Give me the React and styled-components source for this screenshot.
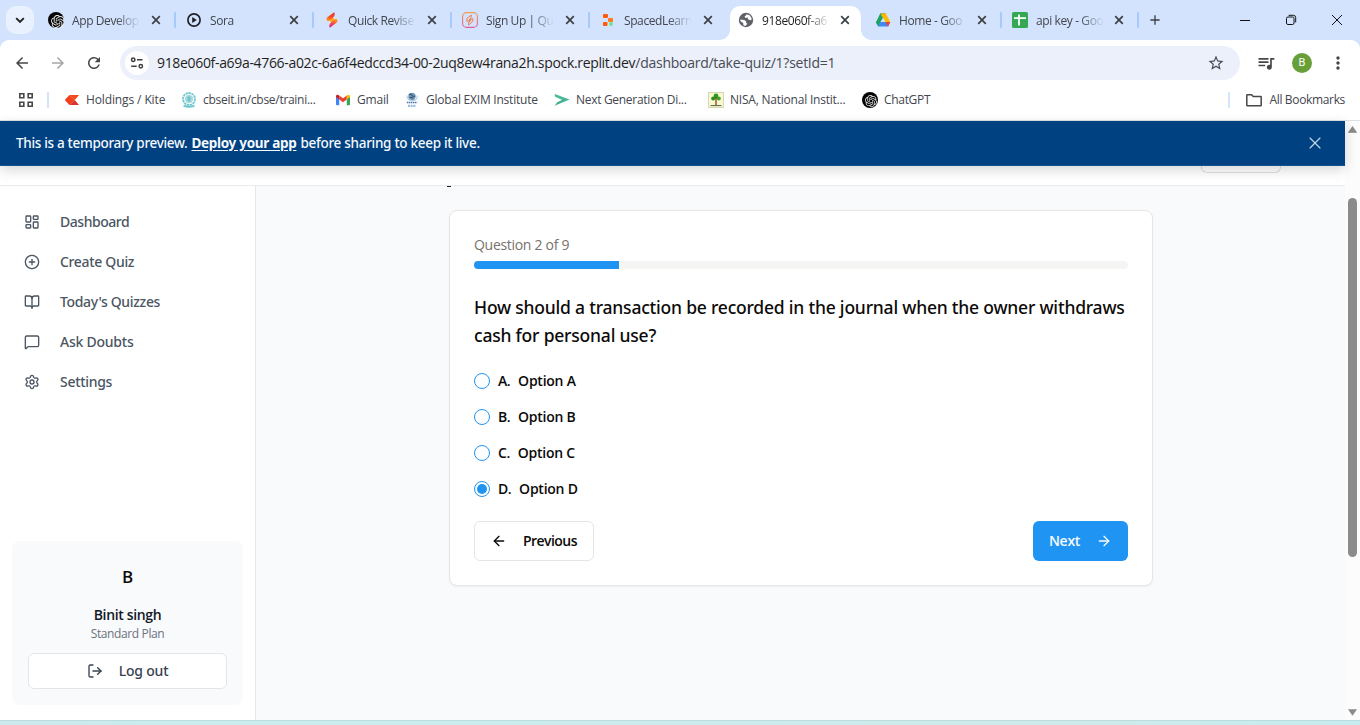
import React from "react";
import styled, { createGlobalStyle, css } from "styled-components";
import {
  LayoutDashboard, CirclePlus, BookOpen, MessageSquare, Settings, LogOut, ArrowLeft, ArrowRight, X,
} from "lucide-react";
import { SiOpenai } from "react-icons/si";
import { MdArrowBack, MdArrowForward, MdRefresh, MdStarBorder, MdMoreVert, MdQueueMusic, MdAdd } from "react-icons/md";

const MEDIUM_FONT = `"Noto Sans", "Open Sans", sans-serif`;

const GlobalStyle = createGlobalStyle`
  *, *::before, *::after { box-sizing: border-box; }
  html, body { margin: 0; padding: 0; overflow: hidden; }
  body { font-family: "Open Sans", "Noto Sans", sans-serif; font-size: 14px; color: #0c0a09; }
  svg { display: block; flex: none; }
`;

const Window = styled.div`
  width: 1360px;
  height: 725px;
  display: flex;
  flex-direction: column;
  overflow: hidden;
  background: #fff;
`;

const Tracked = styled.span`
  letter-spacing: ${(p) => p.$track || 0}px;
  white-space: nowrap;
`;

/* Tab strip */
const TabStrip = styled.div`
  height: 40px;
  flex: none;
  display: flex;
  background: #d3e3fd;
`;

const TabSearch = styled.div`
  width: 28px;
  height: 28px;
  margin: 6px 6px 0;
  border-radius: 10px;
  background: #e9f1fe;
  display: grid;
  place-items: center;
`;

const Tab = styled.div`
  width: ${(p) => p.$width}px;
  height: 40px;
  padding: 0 0 0 8px;
  display: flex;
  align-items: center;
`;

const ActiveTab = styled.div`
  width: 131px;
  margin: 6px 6px 0 0;
  height: 34px;
  padding: 0 0 6px 8px;
  display: flex;
  align-items: center;
  background: #fff;
  border-radius: 10px 10px 0 0;
  position: relative;
  &::before, &::after {
    content: "";
    position: absolute;
    bottom: 0;
    width: 10px;
    height: 10px;
  }
  &::before { left: -10px; background: radial-gradient(circle at 0 0, transparent 9.5px, #fff 10px); }
  &::after { right: -10px; background: radial-gradient(circle at 100% 0, transparent 9.5px, #fff 10px); }
`;

const TabTitle = styled.span`
  width: 67px;
  margin-left: 8px;
  overflow: hidden;
  white-space: nowrap;
  font-size: 12px;
  line-height: 18px;
  padding-top: 1px;
  letter-spacing: -0.4px;
  color: ${(p) => (p.$active ? "#1f1f1f" : "#42464d")};
  mask-image: linear-gradient(to right, #000 44px, transparent 68px);
`;

const TabClose = styled.span`
  width: 16px;
  margin-left: ${(p) => (p.$tight ? 8 : 9)}px;
  display: grid;
  place-items: center;
`;

const TabDivider = styled.span`
  width: 2px;
  height: 16px;
  margin-left: 10px;
  border-radius: 1px;
  background: #a8c7fa;
`;

const NewTab = styled.div`
  width: 16px;
  margin: 12px 0 0 6px;
`;

const WindowControls = styled.div`
  flex: 1;
  display: flex;
  justify-content: flex-end;
  align-items: center;
  gap: 34px;
  padding-right: 17px;
`;

/* Toolbar */
const ToolbarBack = styled.div`
  flex: none;
  background: #d3e3fd;
`;

const Toolbar = styled.div`
  height: 46px;
  display: flex;
  align-items: center;
  padding: 0 12px 0 13px;
  background: #fff;
  border-radius: 9px 9px 0 0;
  color: #474747;
`;

const NavButtons = styled.div`
  display: flex;
  width: 107px;
  gap: 18px;
`;

const AddressBar = styled.div`
  width: 1120px;
  height: 34px;
  display: flex;
  align-items: center;
  padding: 0 15px 0 5px;
  border-radius: 17px;
  background: #ecf0fa;
  font-size: 14px;
  color: #474b52;
`;

const SiteInfo = styled.span`
  width: 24px;
  height: 24px;
  margin-right: 8px;
  border-radius: 50%;
  background: #fff;
  display: grid;
  place-items: center;
`;

const AddressText = styled.span`
  line-height: 20px;
  padding-bottom: 1px;
`;

const Host = styled(Tracked)`
  color: #1f1f1f;
`;

const Spacer = styled.span`
  flex: 1;
`;

const ToolbarActions = styled.div`
  flex: 1;
  display: flex;
  align-items: center;
  justify-content: space-between;
  padding-left: 16px;
`;

const Avatar = styled.span`
  width: 20px;
  height: 20px;
  border-radius: 50%;
  background: #689f38;
  color: #fff;
  font: 11px/20px Roboto, sans-serif;
  text-align: center;
`;

/* Bookmarks */
const BookmarkBar = styled.div`
  height: 35px;
  flex: none;
  display: flex;
  align-items: flex-start;
  padding: 6px 15px 0 18px;
  border-bottom: 1px solid #dfe1e0;
  color: #42464d;
  font-size: 12px;
`;

const Bookmark = styled.span`
  display: flex;
  align-items: center;
  gap: 6px;
  width: ${(p) => (p.$width ? `${p.$width}px` : "auto")};
  line-height: 16px;
`;

const BarDivider = styled.span`
  width: 2px;
  height: 16px;
  margin: 0 15px 0 ${(p) => p.$left || 0}px;
  border-radius: 1px;
  background: #d3e3fd;
`;

/* Page */
const Viewport = styled.div`
  height: 599px;
  flex: none;
  display: flex;
`;

const Page = styled.div`
  width: 1345px;
  display: flex;
  flex-direction: column;
`;

const Banner = styled.div`
  height: 45px;
  flex: none;
  display: flex;
  align-items: center;
  gap: 4px;
  padding: 0 20px 0 16px;
  background: #004182;
  border-bottom: 1px solid #0f5292;
  color: #f5f9fc;
  font: 500 13.5px/20px ${MEDIUM_FONT};
  position: relative;
  box-shadow: 0 4px 12px rgba(0, 0, 0, 0.16);
  z-index: 2;
`;

const DeployLink = styled.a`
  font-weight: 700;
  letter-spacing: -0.3px;
  text-decoration: underline;
  text-underline-offset: 2px;
`;

const PageHeader = styled.div`
  height: 20px;
  flex: none;
  display: flex;
  justify-content: flex-end;
  align-items: flex-start;
  padding-right: 64px;
  background: #fff;
  border-bottom: 1px solid #e9ebee;
  box-shadow: 0 1px 2px rgba(0, 0, 0, 0.03);
`;

const HeaderButton = styled.div`
  width: 80px;
  height: 7px;
  border: 1px solid #e0e0e0;
  border-top: 0;
  border-radius: 0 0 6px 6px;
`;

const Body = styled.div`
  flex: 1;
  min-height: 0;
  display: flex;
`;

const Sidebar = styled.aside`
  width: 256px;
  display: flex;
  flex-direction: column;
  justify-content: space-between;
  padding: 16px 12px 15px;
  border-right: 1px solid #e5e7eb;
  background: #fff;
`;

const NavItem = styled.div`
  height: 40px;
  display: flex;
  align-items: center;
  gap: 20px;
  padding-left: 12px;
  color: #4b5563;
  font: 500 14px/20px ${MEDIUM_FONT};
`;

const UserCard = styled.div`
  height: 164px;
  display: flex;
  flex-direction: column;
  align-items: center;
  padding: 16px;
  border-radius: 8px;
  background: #f9fafb;
`;

const Initial = styled.div`
  font-size: 17px;
  font-weight: 600;
  line-height: 40px;
`;

const UserName = styled(Tracked)`
  margin-top: 8px;
  font-weight: 600;
  line-height: 20px;
  color: #111827;
`;

const UserPlan = styled(Tracked)`
  padding-top: 1px;
  font-size: 12px;
  line-height: 16px;
  color: #6b7280;
`;

const Button = styled.button`
  height: 40px;
  display: flex;
  align-items: center;
  justify-content: center;
  gap: 16px;
  padding: 0 16px;
  border: 1px solid #e5e5e5;
  border-radius: 6px;
  background: #fff;
  color: #0c0a09;
  font: 600 14px/20px "Open Sans", "Noto Sans", sans-serif;
  ${(p) => p.$primary && css`
    width: 95px;
    border: 0;
    background: #2094f3;
    color: #f5faff;
  `}
`;

const LogoutButton = styled(Button)`
  width: 199px;
  height: 36px;
  margin-top: 11px;
  color: #374151;
  font: 500 14px/20px ${MEDIUM_FONT};
`;

const Main = styled.main`
  flex: 1;
  background: #f9fafb;
`;

const HiddenHeading = styled.div`
  height: 24px;
  padding-left: 191px;
  &::before {
    content: "";
    display: block;
    width: 4px;
    height: 1px;
    background: #222;
  }
`;

const QuizCard = styled.section`
  width: 704px;
  height: 376px;
  margin-left: 193px;
  padding: 24px;
  border: 1px solid #e6e6e6;
  border-radius: 8px;
  background: #fff;
  box-shadow: 0 1px 2px rgba(0, 0, 0, 0.05);
`;

const Counter = styled(Tracked)`
  display: block;
  line-height: 20px;
  color: #78716c;
`;

const Track = styled.div`
  height: 8px;
  margin: 6px 0 24px;
  border-radius: 4px;
  overflow: hidden;
  background: #f5f5f4;
`;

const Fill = styled.div`
  height: 100%;
  background: #2094f3;
`;

const Question = styled.h3`
  margin: 0 0 24px;
  font: 500 17.5px/28px ${MEDIUM_FONT};
  letter-spacing: -0.21px;
`;

const Option = styled.label`
  height: 16px;
  margin-bottom: 20px;
  display: flex;
  align-items: center;
  gap: 8px;
  font-weight: 600;
  line-height: 16px;
`;

const Radio = styled.span`
  width: 16px;
  height: 16px;
  border: 1px solid #2094f3;
  border-radius: 50%;
  display: grid;
  place-items: center;
  ${(p) => p.$checked && css`
    &::before {
      content: "";
      width: 10px;
      height: 10px;
      border-radius: 50%;
      background: #2094f3;
    }
  `}
`;

const Actions = styled.div`
  display: flex;
  justify-content: space-between;
  margin-top: 24px;
`;

const Options = styled.div`
  display: flex;
  flex-direction: column;
  margin-bottom: -20px;
`;

const Scrollbar = styled.div`
  width: 15px;
  display: flex;
  flex-direction: column;
  align-items: center;
  padding: 5px 0 4px;
  background: #fcfcfc;
`;

const Thumb = styled.div`
  width: 9px;
  height: 359px;
  margin: 65px 0 auto;
  border-radius: 5px;
  background: #8b8b8b;
`;

const Desktop = styled.div`
  height: 5px;
  flex: none;
  background: linear-gradient(to right, #cde9ed, #c9edef 15%, #cfeaeb 80%, #c5edef);
  border-top: 1px solid #bddcdf;
`;

const CloseIcon = () => (
  <svg width="10" height="10" viewBox="0 0 10 10" stroke="#3c4043" strokeWidth="1.7">
    <path d="M1.2 1.2 8.8 8.8M8.8 1.2 1.2 8.8" />
  </svg>
);

const OpenAIBadge = () => (
  <svg width="16" height="16" viewBox="0 0 16 16">
    <circle cx="8" cy="8" r="8" fill="#050505" />
    <SiOpenai x="3" y="3" width="10" height="10" color="#e8e8e8" />
  </svg>
);

const SoraIcon = () => (
  <svg width="16" height="16" viewBox="0 0 16 16">
    <circle cx="8" cy="8" r="6.1" fill="none" stroke="#202124" strokeWidth="1.7" />
    <path d="M6.2 5v6l4.6-3z" fill="#202124" />
  </svg>
);

const BoltIcon = () => (
  <svg width="16" height="16" viewBox="0 0 16 16">
    <defs>
      <linearGradient id="boltTop" x1="1" y1="0" x2=".2" y2="1">
        <stop offset="0" stopColor="#e8301f" />
        <stop offset=".6" stopColor="#f4502a" />
        <stop offset="1" stopColor="#ff9a1c" />
      </linearGradient>
      <linearGradient id="boltBottom" x1=".8" y1="0" x2=".3" y2="1">
        <stop offset="0" stopColor="#ffab1a" />
        <stop offset=".5" stopColor="#f8543c" />
        <stop offset="1" stopColor="#d92a86" />
      </linearGradient>
    </defs>
    <path d="M4.6 6.2 8.6 4.4 11.4 9.2 7.4 11.4z" fill="#ffa81c" />
    <path d="M2.5 7.2Q2.4 5.8 3.5 5L9.5.8Q10.8.2 10.7 1.6 10.8 3.9 9.4 5L5.2 8.8Q2.6 9.8 2.5 7.2Z" fill="url(#boltTop)" />
    <path d="M13.5 8.5Q13.6 10 12.5 10.8L6.5 15.2Q5.2 15.8 5.3 14.4 5.2 12.1 6.6 11L10.8 7Q13.4 6 13.5 8.5Z" fill="url(#boltBottom)" />
  </svg>
);

const SignUpIcon = () => (
  <svg width="16" height="16" viewBox="0 0 16 16" fill="none">
    <defs>
      <linearGradient id="ring" x1="0" y1="0" x2="0" y2="1">
        <stop offset="0" stopColor="#f49a4e" />
        <stop offset="1" stopColor="#e05a9c" />
      </linearGradient>
    </defs>
    <rect x=".6" y=".6" width="14.8" height="14.8" rx="4" stroke="url(#ring)" strokeWidth="1.1" />
    <path d="M4.8 6.5 9.3 3 9 6.2 7 7.8 11 6.7 10.7 9.4 6.5 13 6.8 10 8.9 8.4 4.9 9.3Z" stroke="#f2733c" strokeWidth=".9" strokeLinejoin="round" />
  </svg>
);

const ReplitIcon = () => (
  <svg width="16" height="16" viewBox="0 0 16 16">
    <rect x="3" y="2" width="5" height="4" rx="1" fill="#ff5a0a" />
    <rect x="8" y="6" width="5" height="4" rx="1" fill="#ff7a1f" />
    <rect x="3" y="10" width="4.5" height="4" rx="1" fill="#ff5a0a" />
    <circle cx="11" cy="12" r="2" fill="#6fe38d" />
  </svg>
);

const GlobeIcon = () => (
  <svg width="16" height="16" viewBox="0 0 16 16">
    <circle cx="8" cy="8" r="7.2" fill="#5f6368" />
    <path d="M8.6 2.2 12 3.6 13.9 7 12.6 8.2 10.3 7.4 9.6 5.6 7.4 5.9 6.6 4.3 8 3.6z" fill="#fff" />
    <path d="M2.1 7.6 6.2 8 8.2 9.6 8 11 9.4 11.6 7.6 13.9 5.4 13.2 5.2 11 2.8 9.6z" fill="#fff" />
  </svg>
);

const DriveIcon = () => (
  <svg width="16" height="16" viewBox="0 0 16 16">
    <path d="M5.4 1.3h5.2L8 6z" fill="#188038" />
    <path d="M5.4 1.3 8 6 3.2 14.4.8 10.4z" fill="#1ea362" />
    <path d="M10.6 1.3 15.3 10H10.2L5.6 1.6z" fill="#ffba00" />
    <path d="M5.5 10h9.8l-2.2 4.4H3z" fill="#4285f4" />
    <path d="M10.3 10h5l-2.2 4.4z" fill="#ea4335" />
    <path d="M8 5.9 10.3 10H5.6z" fill="#d3e3fd" />
  </svg>
);

const SheetsIcon = () => (
  <svg width="16" height="16" viewBox="0 0 16 16">
    <rect width="16" height="16" rx="1.5" fill="#34a853" />
    <path d="M2 6.2h12M7 2.5v11" stroke="#fff" strokeWidth="1.8" />
  </svg>
);

const TuneIcon = () => (
  <svg width="14" height="14" viewBox="0 0 14 14" fill="none" stroke="#3c4043" strokeWidth="1.5">
    <circle cx="3.2" cy="3.7" r="1.7" />
    <path d="M7 3.7h5.5M1.2 10.3h5.5" />
    <circle cx="10.8" cy="10.3" r="1.7" />
  </svg>
);

const AppsIcon = () => (
  <svg width="16" height="16" viewBox="0 0 16 16" fill="none" stroke="#474747" strokeWidth="1.6">
    <path d="M1.8 1.8h4v4h-4zM10.2 1.8h4v4h-4zM1.8 10.2h4v4h-4zM10.2 10.2h4v4h-4z" />
  </svg>
);

const KiteIcon = () => (
  <svg width="16" height="16" viewBox="0 0 16 16">
    <path d="M5.4 3H15l-4.2 5z" fill="#f6461a" />
    <path d="M5.4 3 .8 8l4.6 5 5.4-5z" fill="#f0401c" />
    <path d="M5.4 13H15l-4.2-5z" fill="#db342c" />
  </svg>
);

const CbseIcon = () => (
  <svg width="16" height="16" viewBox="0 0 16 16" fill="none">
    <circle cx="8" cy="7" r="6" stroke="#6fc7cd" strokeWidth="1.8" strokeDasharray="2.4 .6" />
    <circle cx="8" cy="7" r="4.2" fill="#a4dade" />
    <path d="M8 4v5.6M6.4 6.2h3.2M6.6 8.2h2.8" stroke="#5ab5bd" strokeWidth=".9" />
    <path d="M2.5 13.6Q8 15.8 13.5 13.6" stroke="#6fc7cd" strokeWidth="2" />
  </svg>
);

const GmailIcon = () => (
  <svg width="16" height="16" viewBox="0 0 16 16">
    <path d="M1 4.5V12.2q0 1 1 1h2.2V6.8z" fill="#4285f4" />
    <path d="M15 4.5V12.2q0 1-1 1h-2.2V6.8z" fill="#34a853" />
    <path d="M4.2 3.4 8 6.3l3.8-2.9v4L8 10.3 4.2 7.4z" fill="#ea4335" />
    <path d="M1 4.2Q1.3 1.7 4.2 3.4v4L1 5z" fill="#c5221f" />
    <path d="M15 4.2Q14.7 1.7 11.8 3.4v4L15 5z" fill="#fbbc04" />
  </svg>
);

const EximIcon = () => (
  <svg width="16" height="16" viewBox="0 0 16 16" fill="none">
    <circle cx="8" cy="4.4" r="3.7" fill="#7b9bb2" />
    <path d="M5 3q2-2 3 .2t3 .6M5.4 5.8q2-1 4 .6" stroke="#315f83" strokeWidth="1.2" />
    <path d="M3 3.5Q2.5 8 8 8.5t5.2-5" stroke="#9bc5e4" strokeWidth="1" />
    <path d="M2.8 10.5h10.4" stroke="#4a76ad" strokeWidth="1.6" strokeDasharray="1.5 .5" />
    <path d="M4 13.8h8" stroke="#9bbfe4" strokeWidth="2.2" strokeDasharray="2 .6" />
  </svg>
);

const NextGenIcon = () => (
  <svg width="16" height="16" viewBox="0 0 16 16">
    <path d="M.8 2 15.5 7.6 9.8 8.8.8 4.6Z" fill="#4cb99a" />
    <path d="M15.5 7.6.6 13.8 3.2 10.2 9 7.6z" fill="#43b08f" />
  </svg>
);

const NisaIcon = () => (
  <svg width="16" height="16" viewBox="0 0 16 16">
    <rect x=".5" y=".5" width="15" height="15" fill="#f7f8cf" stroke="#d5d8b0" />
    <circle cx="8" cy="4" r="2.4" fill="#2f9a20" />
    <circle cx="5.2" cy="6.4" r="2" fill="#2a8c1c" />
    <circle cx="10.8" cy="6.4" r="2" fill="#38a726" />
    <path d="M8 5v8" stroke="#8a3b1c" strokeWidth="1.3" />
    <path d="M2.5 13.6h11" stroke="#55604a" strokeWidth="1" />
  </svg>
);

const FolderIcon = () => (
  <svg width="18" height="16" viewBox="0 0 18 16" fill="none" stroke="#474747" strokeWidth="1.5">
    <path d="M1.8 13.2V3.2q0-.5.5-.5h4.2l1.8 1.8h7.4q.5 0 .5.5v8.2q0 .5-.5.5H2.3q-.5 0-.5-.5z" />
  </svg>
);

const TABS = [
  { title: "App Develop", icon: <OpenAIBadge />, width: 138 },
  { title: "Sora", icon: <SoraIcon />, width: 138 },
  { title: "Quick Revise", icon: <BoltIcon />, width: 138 },
  { title: "Sign Up | Qu", icon: <SignUpIcon />, width: 138 },
  { title: "SpacedLearn", icon: <ReplitIcon />, width: 138, bare: true },
  { title: "918e060f-a6", icon: <GlobeIcon />, active: true },
  { title: "Home - Goo", icon: <DriveIcon />, width: 137, tight: true },
  { title: "api key - Goo", icon: <SheetsIcon />, width: 137, tight: true },
];

const BOOKMARKS = [
  { label: "Holdings / Kite", icon: <KiteIcon />, width: 117, track: -0.12 },
  { label: "cbseit.in/cbse/traini...", icon: <CbseIcon />, width: 154, track: -0.29 },
  { label: "Gmail", icon: <GmailIcon />, width: 69, track: -0.2 },
  { label: "Global EXIM Institute", icon: <EximIcon />, width: 150, track: -0.22 },
  { label: "Next Generation Di...", icon: <NextGenIcon />, width: 154, track: -0.3 },
  { label: "NISA, National Instit...", icon: <NisaIcon />, width: 154, track: -0.22 },
  { label: "ChatGPT", icon: <OpenAIBadge />, track: -0.32 },
];

const NAV = [
  { label: "Dashboard", Icon: LayoutDashboard, track: -0.47 },
  { label: "Create Quiz", Icon: CirclePlus, track: -0.33 },
  { label: "Today's Quizzes", Icon: BookOpen, track: -0.34 },
  { label: "Ask Doubts", Icon: MessageSquare, track: -0.24 },
  { label: "Settings", Icon: Settings, track: -0.3 },
];

const OPTIONS = ["A", "B", "C", "D"];
const SELECTED = "D";
const PROGRESS = (2 / 9) * 100;

export default function App() {
  return (
    <Window>
      <GlobalStyle />
      <TabStrip>
        <TabSearch>
          <svg width="10" height="7" viewBox="0 0 10 7" fill="none" stroke="#1f1f1f" strokeWidth="1.9"><path d="m1.2 1.2 3.8 3.8 3.8-3.8" /></svg>
        </TabSearch>
        {TABS.map(({ title, icon, width, active, bare, tight }) => {
          const Shell = active ? ActiveTab : Tab;
          return (
            <Shell key={title} $width={width}>
              {icon}
              <TabTitle $active={active}>{title}</TabTitle>
              <TabClose $tight={tight || active}><CloseIcon /></TabClose>
              {!active && !bare && <TabDivider />}
            </Shell>
          );
        })}
        <NewTab><MdAdd size={16} color="#3c4043" /></NewTab>
        <WindowControls>
          <svg width="12" height="12" viewBox="0 0 12 12" stroke="#111"><path d="M1 6.5h10" /></svg>
          <svg width="12" height="12" viewBox="0 0 12 12" fill="none" stroke="#111"><rect x="1.5" y="3" width="7.5" height="7.5" rx="1.4" /><path d="M3.6 1.3h4.8q2.3 0 2.3 2.3v4.8" /></svg>
          <svg width="12" height="12" viewBox="0 0 12 12" stroke="#111"><path d="m1 1 10 10M11 1 1 11" /></svg>
        </WindowControls>
      </TabStrip>

      <ToolbarBack>
        <Toolbar>
          <NavButtons>
            <MdArrowBack size={18} />
            <MdArrowForward size={18} color="#a6a6a6" />
            <MdRefresh size={18} />
          </NavButtons>
          <AddressBar>
            <SiteInfo><TuneIcon /></SiteInfo>
            <AddressText>
              <Host $track={-0.33}>918e060f-a69a-4766-a02c-6a6f4edccd34-00-2uq8ew4rana2h.spock.replit.dev</Host>
              <Tracked $track={-0.26}>/dashboard/take-quiz/1?setId=1</Tracked>
            </AddressText>
            <Spacer />
            <MdStarBorder size={18} />
          </AddressBar>
          <ToolbarActions>
            <MdQueueMusic size={20} />
            <Avatar>B</Avatar>
            <MdMoreVert size={20} />
          </ToolbarActions>
        </Toolbar>
      </ToolbarBack>

      <BookmarkBar>
        <AppsIcon />
        <BarDivider $left={13} />
        {BOOKMARKS.map((b) => (
          <Bookmark key={b.label} $width={b.width}>
            {b.icon}
            <Tracked $track={b.track}>{b.label}</Tracked>
          </Bookmark>
        ))}
        <Spacer />
        <BarDivider />
        <Bookmark>
          <FolderIcon />
          <Tracked $track={-0.34}>All Bookmarks</Tracked>
        </Bookmark>
      </BookmarkBar>

      <Viewport>
        <Page>
          <Banner>
            <Tracked $track={-0.31}>This is a temporary preview.</Tracked>
            <DeployLink>Deploy your app</DeployLink>
            <Tracked $track={-0.29}>before sharing to keep it live.</Tracked>
            <Spacer />
            <X size={20} strokeWidth={1.4} color="#c5d6e6" />
          </Banner>
          <PageHeader><HeaderButton /></PageHeader>
          <Body>
            <Sidebar>
              <nav>
                {NAV.map(({ label, Icon, track }) => (
                  <NavItem key={label}>
                    <Icon size={16} />
                    <Tracked $track={track}>{label}</Tracked>
                  </NavItem>
                ))}
              </nav>
              <UserCard>
                <Initial>B</Initial>
                <UserName $track={-0.35}>Binit singh</UserName>
                <UserPlan $track={-0.38}>Standard Plan</UserPlan>
                <LogoutButton>
                  <LogOut size={16} />
                  <Tracked $track={-0.2}>Log out</Tracked>
                </LogoutButton>
              </UserCard>
            </Sidebar>
            <Main>
              <HiddenHeading />
              <QuizCard>
                <Counter $track={-0.3}>Question 2 of 9</Counter>
                <Track><Fill style={{ width: `${PROGRESS}%` }} /></Track>
                <Question>
                  How should a transaction be recorded in the journal when the owner withdraws cash for personal use?
                </Question>
                <Options>
                  {OPTIONS.map((o) => (
                    <Option key={o}>
                      <Radio $checked={o === SELECTED} />
                      <Tracked $track={-0.5}>{o}.</Tracked>
                      <Tracked $track={-0.25}>Option {o}</Tracked>
                    </Option>
                  ))}
                </Options>
                <Actions>
                  <Button>
                    <ArrowLeft size={16} />
                    <Tracked $track={-0.55}>Previous</Tracked>
                  </Button>
                  <Button $primary>
                    <Tracked $track={-0.3}>Next</Tracked>
                    <ArrowRight size={16} />
                  </Button>
                </Actions>
              </QuizCard>
            </Main>
          </Body>
        </Page>
        <Scrollbar>
          <svg width="9" height="7" viewBox="0 0 9 7"><path d="M4.5.2 9 6.8H0z" fill="#8b8b8b" stroke="#8b8b8b" strokeLinejoin="round" strokeWidth=".4" /></svg>
          <Thumb />
          <svg width="9" height="7" viewBox="0 0 9 7"><path d="M4.5 6.8 9 .2H0z" fill="#8b8b8b" /></svg>
        </Scrollbar>
      </Viewport>
      <Desktop />
    </Window>
  );
}
